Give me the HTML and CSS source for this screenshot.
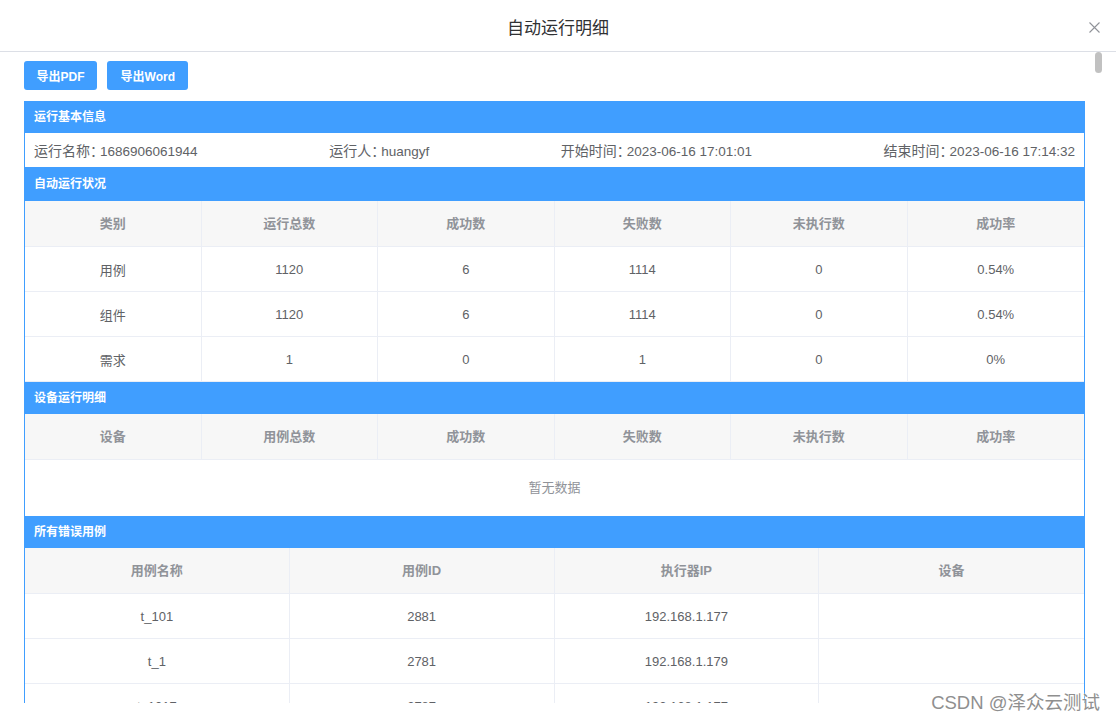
FILE: index.html
```html
<!DOCTYPE html>
<html lang="zh-CN">
<head>
<meta charset="utf-8">
<title>自动运行明细</title>
<link rel="stylesheet" href="styles.css">
</head>
<body>
<div class="dialog">
  <header class="dlg-head">
    <span class="dlg-title">自动运行明细</span>
    <span class="dlg-close" aria-label="close">
      <svg width="11" height="11" viewBox="0 0 11 11"><path d="M0.5 0.5 L10.5 10.5 M10.5 0.5 L0.5 10.5" stroke="#909399" stroke-width="1.1" fill="none"/></svg>
    </span>
  </header>
  <div class="dlg-body">
    <div class="toolbar">
      <button class="btn">导出PDF</button>
      <button class="btn">导出Word</button>
    </div>
    <div class="report">
      <div class="band">运行基本信息</div>
      <div class="info">
        <span class="field">运行名称：<span class="val">1686906061944</span></span>
        <span class="field">运行人：<span class="val">huangyf</span></span>
        <span class="field">开始时间：<span class="val">2023-06-16 17:01:01</span></span>
        <span class="field">结束时间：<span class="val">2023-06-16 17:14:32</span></span>
      </div>
      <div class="band band-tall">自动运行状况</div>
      <table class="grid">
        <thead>
          <tr><th>类别</th><th>运行总数</th><th>成功数</th><th>失败数</th><th>未执行数</th><th>成功率</th></tr>
        </thead>
        <tbody>
          <tr><td>用例</td><td>1120</td><td>6</td><td>1114</td><td>0</td><td>0.54%</td></tr>
          <tr><td>组件</td><td>1120</td><td>6</td><td>1114</td><td>0</td><td>0.54%</td></tr>
          <tr><td>需求</td><td>1</td><td>0</td><td>1</td><td>0</td><td>0%</td></tr>
        </tbody>
      </table>
      <div class="band">设备运行明细</div>
      <table class="grid">
        <thead>
          <tr><th>设备</th><th>用例总数</th><th>成功数</th><th>失败数</th><th>未执行数</th><th>成功率</th></tr>
        </thead>
      </table>
      <div class="empty">暂无数据</div>
      <div class="band">所有错误用例</div>
      <table class="grid">
        <thead>
          <tr><th>用例名称</th><th>用例ID</th><th>执行器IP</th><th>设备</th></tr>
        </thead>
        <tbody>
          <tr><td>t_101</td><td>2881</td><td>192.168.1.177</td><td></td></tr>
          <tr><td>t_1</td><td>2781</td><td>192.168.1.179</td><td></td></tr>
          <tr><td>t_1017</td><td>2787</td><td>192.168.1.177</td><td></td></tr>
          <tr><td>t_1018</td><td>2788</td><td>192.168.1.177</td><td></td></tr>
        </tbody>
      </table>
    </div>
  </div>
  <div class="scroll-thumb"></div>
  <div class="watermark">CSDN @泽众云测试</div>
</div>
</body>
</html>
```
FILE: styles.css
```css
html, body {
  margin: 0;
  padding: 0;
  height: 100%;
}
body {
  font-family: "Liberation Sans", "Noto Sans CJK SC", sans-serif;
  background: #fff;
  overflow: hidden;
}
.dialog {
  position: relative;
  height: 721px;
  display: flex;
  flex-direction: column;
}
.dlg-head {
  flex-shrink: 0;
  height: 51px;
  border-bottom: 1px solid #dcdfe6;
  display: flex;
  align-items: center;
  justify-content: center;
  position: relative;
}
.dlg-title {
  font-size: 17px;
  color: #303133;
  line-height: 24px;
  padding-top: 6px;
}
.dlg-close {
  position: absolute;
  right: 16px;
  top: 22px;
  width: 11px;
  height: 11px;
  display: block;
}
.dlg-close svg {
  display: block;
}
.dlg-body {
  flex-shrink: 0;
  height: 651px;
  box-sizing: border-box;
  overflow: hidden;
  padding: 9px 31px 0 24px;
}
.toolbar {
  display: flex;
  gap: 10px;
  margin-bottom: 11px;
}
.btn {
  height: 29px;
  padding: 0 12.5px;
  background: #409eff;
  border: 0;
  border-radius: 3px;
  color: #fff;
  font-family: inherit;
  font-size: 12px;
  font-weight: bold;
}
.btn + .btn {
  padding: 0 13.5px;
}
.report {
  border: 1px solid #409eff;
  border-top: 0;
}
.band {
  height: 32px;
  line-height: 32px;
  background: #409eff;
  color: #fff;
  font-size: 12px;
  font-weight: bold;
  padding-left: 9px;
}
.band-tall {
  height: 34px;
  line-height: 34px;
}
.info {
  height: 34px;
  display: flex;
  align-items: center;
  justify-content: space-between;
  padding: 0 9px;
  font-size: 14px;
  color: #606266;
}
.field {
  font-feature-settings: "halt";
}
.val {
  margin-left: 3px;
  font-size: 13.5px;
}
.grid {
  width: 100%;
  table-layout: fixed;
  border-collapse: separate;
  border-spacing: 0;
}
.grid th,
.grid td {
  padding: 0;
  text-align: center;
  border-right: 1px solid #ebeef5;
  border-bottom: 1px solid #ebeef5;
  font-size: 13px;
}
.grid th:last-child,
.grid td:last-child {
  border-right: 0;
}
.grid th {
  background: #f7f7f7;
  color: #909399;
  font-weight: bold;
  padding-bottom: 2px;
  box-sizing: border-box;
  height: 46px;
}
.grid td {
  height: 44px;
  color: #606266;
}
.empty {
  height: 56px;
  line-height: 56px;
  text-align: center;
  font-size: 13px;
  color: #909399;
}
.scroll-thumb {
  position: absolute;
  left: 1095px;
  top: 52px;
  width: 7px;
  height: 21px;
  border-radius: 4px;
  background: #c1c1c1;
}
.watermark {
  position: absolute;
  right: 16px;
  top: 692px;
  font-size: 18.5px;
  line-height: 22px;
  color: #8f8f8f;
  text-shadow: 0 0 2px #fff, 0 0 2px #fff;
  white-space: nowrap;
}
```
